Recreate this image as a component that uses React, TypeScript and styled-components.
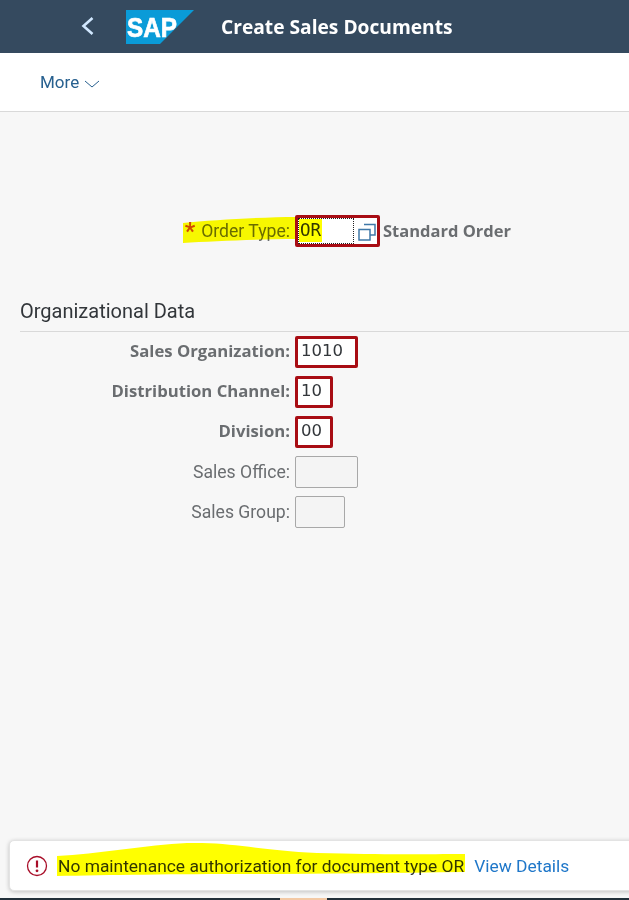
import React, { FunctionComponent } from "react";
import styled, { createGlobalStyle } from "styled-components";

const GlobalStyle = createGlobalStyle`
  html, body {
    margin: 0;
    padding: 0;
    background: #f7f7f7;
    overflow: hidden;
  }
  * {
    box-sizing: border-box;
  }
`;

const Page = styled.div`
  width: 629px;
  height: 900px;
  display: flex;
  flex-direction: column;
  overflow: hidden;
  background: #f7f7f7;
  font-family: Roboto, "Liberation Sans", sans-serif;
`;

const ShellBar = styled.header`
  height: 53px;
  flex: none;
  display: flex;
  align-items: center;
  padding-left: 81px;
  background: #354a5f;
`;

const BackButton = styled.svg`
  width: 14px;
  height: 20px;
  margin: 0 31px 2px 0;
`;

const Logo = styled.svg`
  width: 68px;
  height: 34px;
  margin-right: 27px;
`;

const ShellTitle = styled.h1`
  margin: 0 0 1px;
  font-family: "Open Sans", sans-serif;
  font-size: 19.2px;
  font-weight: 700;
  color: #fff;
  white-space: nowrap;
`;

const Toolbar = styled.div`
  height: 59px;
  flex: none;
  display: flex;
  align-items: center;
  padding-left: 40px;
  background: #fff;
  border-bottom: 1px solid #d9d9d9;
`;

const MoreLink = styled.span`
  display: flex;
  align-items: center;
  gap: 5px;
  font-size: 17px;
  color: #27608f;
`;

const Chevron = styled.svg`
  width: 16px;
  height: 8px;
  margin-top: 3px;
`;

const Content = styled.main`
  flex: 1;
  display: flex;
  flex-direction: column;
  padding-top: 99px;
`;

const FieldRow = styled.div`
  height: 40px;
  display: flex;
  align-items: center;
`;

const Label = styled.label<{ $bold?: boolean }>`
  position: relative;
  width: 290px;
  flex: none;
  padding-bottom: ${(p) => (p.$bold ? 3 : 0)}px;
  text-align: right;
  font-family: ${(p) => (p.$bold ? '"Open Sans", sans-serif' : "Roboto, sans-serif")};
  font-size: ${(p) => (p.$bold ? 16.7 : 17.6)}px;
  font-weight: ${(p) => (p.$bold ? 700 : 400)};
  color: #6a6d70;
  white-space: nowrap;
`;

const Required = styled.span`
  color: #d04a02;
  font-size: 23px;
  font-weight: 700;
  line-height: 1;
  margin-right: 6px;
  vertical-align: -2px;
`;

const Input = styled.div<{ $width: number; $marked?: boolean }>`
  width: ${(p) => p.$width}px;
  height: 32px;
  margin-left: 5px;
  padding: 0 0 3px 3px;
  display: flex;
  align-items: center;
  flex: none;
  font-family: "DejaVu Sans", sans-serif;
  font-size: 16.5px;
  color: #32363a;
  background: ${(p) => (p.$marked ? "#fff" : "#f4f4f4")};
  border: ${(p) => (p.$marked ? "3px solid #a80d14" : "1px solid #a8a8a8")};
  border-radius: 2px;
`;

const OrderInput = styled(Input)`
  position: relative;
  padding: 0;
  align-items: stretch;
`;

const FocusBox = styled.div`
  position: relative;
  width: 56px;
  display: flex;
  align-items: center;
  padding: 0 0 2px 1px;
  font-family: "DejaVu Sans Mono", monospace;
  font-size: 17.5px;
  border: 1px dotted #222;
`;

const ValueHelp = styled.svg`
  width: 18px;
  height: 18px;
  margin: 5px 0 0 4px;
`;

const Description = styled.span`
  margin: 0 0 2px 3px;
  font-family: "Open Sans", sans-serif;
  font-size: 16.5px;
  font-weight: 700;
  color: #6a6d70;
  white-space: nowrap;
`;

const SectionTitle = styled.h2`
  margin: 46px 0 0 20px;
  padding: 1px 0 7px;
  font-size: 20px;
  line-height: 26px;
  font-weight: 400;
  color: #32363a;
  border-bottom: 1px solid #d9d9d9;
`;

const Marker = styled.svg`
  position: absolute;
  pointer-events: none;
  mix-blend-mode: multiply;
`;

const LabelMarker = styled(Marker)`
  left: 183px;
  top: -3px;
  width: 113px;
  height: 26px;
`;

const ValueMarker = styled(Marker)`
  left: 0;
  top: 0;
  width: 23px;
  height: 23px;
`;

const MessageStrip = styled.div`
  position: relative;
  height: 51px;
  margin: auto 0 7px 9px;
  width: 640px;
  flex: none;
  display: flex;
  align-items: center;
  padding-left: 16px;
  background: #fff;
  border: 1px solid #e3e3e3;
  border-radius: 5px;
  box-shadow: 0 1px 4px rgba(0, 0, 0, 0.22);
  font-size: 17.4px;
  color: #32363a;
  white-space: nowrap;
`;

const ErrorIcon = styled.svg`
  width: 22px;
  height: 22px;
  flex: none;
  margin-right: 10px;
`;

const MessageMarker = styled(Marker)`
  left: 47px;
  top: 2px;
  width: 408px;
  height: 34px;
`;

const MessageText = styled.span`
  margin-right: 10px;
`;

const DetailsLink = styled.span`
  color: #1f77c9;
`;

const ScreenEdge = styled.div`
  height: 2px;
  flex: none;
  padding-left: 280px;
  background: #22303a;
`;

const EdgePatch = styled.div`
  width: 47px;
  height: 2px;
  background: #f3c9a5;
`;

const App: FunctionComponent = () => {
  return (
    <Page>
      <GlobalStyle />
      <ShellBar>
        <BackButton viewBox="0 0 14 20">
          <path d="M11.5 2 2.5 10 11.5 18" fill="none" stroke="#d1e8ff" strokeWidth="2.6" />
        </BackButton>
        <Logo viewBox="0 0 68 34">
          <path d="M0 0H68L34 34H0Z" fill="#0a9bd8" />
          <text
            x="1"
            y="27"
            fontFamily="Liberation Sans"
            fontSize="27"
            fontWeight="700"
            fill="#fff"
            stroke="#fff"
            strokeWidth="0.7"
            textLength="50"
            lengthAdjust="spacingAndGlyphs"
          >
            SAP
          </text>
        </Logo>
        <ShellTitle>Create Sales Documents</ShellTitle>
      </ShellBar>

      <Toolbar>
        <MoreLink>
          More
          <Chevron viewBox="0 0 16 8">
            <path d="M1 1 8 7 15 1" fill="none" stroke="#27608f" strokeWidth="1" />
          </Chevron>
        </MoreLink>
      </Toolbar>

      <Content>
        <FieldRow>
          <Label>
            <LabelMarker viewBox="0 0 113 26">
              <path d="M0 6C30 3 80 0 113 0V22C80 22 30 24 0 26Z" fill="#ffff00" />
            </LabelMarker>
            <Required>*</Required>Order Type:
          </Label>
          <OrderInput $width={85} $marked>
            <FocusBox>
              <ValueMarker viewBox="0 0 23 23">
                <path d="M0 0H23V23H0Z" fill="#ffff00" />
              </ValueMarker>
              OR
            </FocusBox>
            <ValueHelp viewBox="0 0 18 18">
              <path d="M6 1.5H17V12H12M1 6.5H12V17H1Z" fill="none" stroke="#3f78a8" strokeWidth="1.5" />
            </ValueHelp>
          </OrderInput>
          <Description>Standard Order</Description>
        </FieldRow>

        <SectionTitle>Organizational Data</SectionTitle>

        <FieldRow>
          <Label $bold>Sales Organization:</Label>
          <Input $width={63} $marked>1010</Input>
        </FieldRow>
        <FieldRow>
          <Label $bold>Distribution Channel:</Label>
          <Input $width={38} $marked>10</Input>
        </FieldRow>
        <FieldRow>
          <Label $bold>Division:</Label>
          <Input $width={38} $marked>00</Input>
        </FieldRow>
        <FieldRow>
          <Label>Sales Office:</Label>
          <Input $width={63} />
        </FieldRow>
        <FieldRow>
          <Label>Sales Group:</Label>
          <Input $width={50} />
        </FieldRow>
      </Content>

      <MessageStrip>
        <MessageMarker viewBox="0 0 408 34">
          <path d="M0 13C40 11 90 2 130 0C175 -1 200 7 260 10C330 12 370 11 408 11V29C340 30 260 31 190 31C120 31 50 32 0 33Z" fill="#ffff00" />
        </MessageMarker>
        <ErrorIcon viewBox="0 0 22 22">
          <circle cx="11" cy="11" r="9.5" fill="none" stroke="#a80d28" strokeWidth="1.3" />
          <path d="M11 5.5V12.5" stroke="#a80d28" strokeWidth="2.2" />
          <circle cx="11" cy="15.8" r="1.4" fill="#a80d28" />
        </ErrorIcon>
        <MessageText>No maintenance authorization for document type OR</MessageText>
        <DetailsLink>View Details</DetailsLink>
      </MessageStrip>
      <ScreenEdge>
        <EdgePatch />
      </ScreenEdge>
    </Page>
  );
};

export default App;
